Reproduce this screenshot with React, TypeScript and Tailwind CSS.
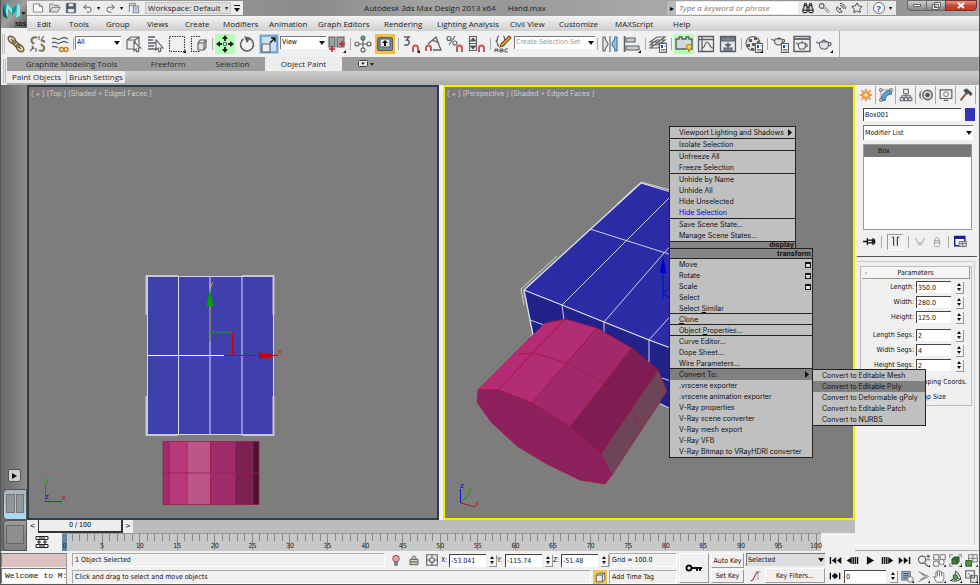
import type { ReactNode } from 'react';
import { Binoculars, Redo2, SatelliteDish, Star, Undo2 } from 'lucide-react';
import clsx from 'clsx';

const uiFont = "font-['Open_Sans','Noto_Sans',sans-serif]";
const formFont = "font-['DejaVu_Sans_Condensed','Open_Sans',sans-serif]";
const quadFont = "font-['Inter','Liberation_Sans',sans-serif]";

const menus = [
  { name: 'Edit', width: 'w-[32px]' },
  { name: 'Tools', width: 'w-[37px]' },
  { name: 'Group', width: 'w-[41px]' },
  { name: 'Views', width: 'w-[38px]' },
  { name: 'Create', width: 'w-[38px]' },
  { name: 'Modifiers', width: 'w-[46px]' },
  { name: 'Animation', width: 'w-[49px]' },
  { name: 'Graph Editors', width: 'w-[66px]' },
  { name: 'Rendering', width: 'w-[53px]' },
  { name: 'Lighting Analysis', width: 'w-[73px]' },
  { name: 'Civil View', width: 'w-[49px]' },
  { name: 'Customize', width: 'w-[56px]' },
  { name: 'MAXScript', width: 'w-[58px]' },
  { name: 'Help', width: 'w-[32px]' },
];

const Icon = ({ children, size = 18 }: { children: ReactNode; size?: number }) => (
  <svg
    width={size}
    height={size}
    viewBox="0 0 18 18"
    fill="none"
    stroke="#5a6067"
    strokeWidth="1.1"
    className="block shrink-0"
    aria-hidden="true"
  >
    {children}
  </svg>
);

const Corner = () => <path d="M18 15v3h-3z" fill="#111" stroke="none" />;

const Magnet = () => (
  <>
    <path d="M11 16v-3a2.500 2.500 0 0 1 5 0v3" stroke="#cf5550" strokeWidth="2" />
    <path d="M10 16.500h2M15 16.500h2" stroke="#777" strokeWidth="1.200" />
  </>
);

const Teapot = () => (
  <path d="M5 7h8c1 3 0 6-2 7H7C5 13 4 10 5 7zM5 9 1 7M13 8c4-2 4 3 0 3M6 7c1-2 5-2 6 0M9 5V4" fill="#e2e2e2" />
);

const Sheet = () => (
  <>
    <path d="M10.500 8.500h7v9h-7z" fill="#fff" />
    <path d="M12 10h2v3h-2z" fill="#1f4e9c" stroke="none" />
    <path d="M15 11h1.500M12 14.500h4.500M12 16h4.500" strokeWidth=".8" />
  </>
);

const Tool = ({ label, tone, children }: { label: string; tone?: string; children: ReactNode }) => (
  <button aria-label={label} className="flex h-5 w-[22px] shrink-0 items-center justify-center">
    <span className={clsx('flex h-5 w-5 items-center justify-center', tone)}>
      <Icon>{children}</Icon>
    </span>
  </button>
);

const Sep = () => (
  <div className="flex w-1 shrink-0 justify-center">
    <div className="h-3 w-px bg-[#aaa]" />
  </div>
);

const Combo = ({ label, value, className }: { label: string; value: string; className?: string }) => (
  <span className={clsx('relative block border-t border-l border-[#777]', className)}>
    <select aria-label={label} className="block h-full w-full appearance-none bg-transparent pr-2 pl-px outline-none">
      <option>{value}</option>
    </select>
    <span className="pointer-events-none absolute inset-y-0 right-0 flex w-2 items-center justify-center">
      <svg width="6" height="4" viewBox="0 0 6 4" aria-hidden="true">
        <path d="M0 0h6L3 4z" fill="#111" />
      </svg>
    </span>
  </span>
);

const Spin = () => (
  <button aria-label="Step value" className="flex h-3 w-2 shrink-0 items-center justify-center bg-[#f4f4f4] shadow-[1px_1px_0_#999]">
    <svg width="6" height="10" viewBox="0 0 6 10" aria-hidden="true">
      <path d="M3 1 5 4H1zM3 9 5 6H1z" fill="#111" />
    </svg>
  </button>
);

const TitleBar = () => (
  <div className="flex h-4 items-center bg-[linear-gradient(90deg,#a5a5a5,#8b8b8b_30%,#a4a4a4_42%,#989898_50%,#a9a9a9_66%,#878787_85%,#a5a5a5)]">
    <div className="flex h-[14px] w-[216px] shrink-0 items-center bg-[#ececec]">
      <div className="flex w-[118px] shrink-0 items-center justify-between px-[5px]">
        <button aria-label="New">
          <Icon size={12}>
            <path d="M2 3h9l5 4v8H2zM11 3v4h5" fill="#fff" />
          </Icon>
        </button>
        <button aria-label="Open">
          <Icon size={12}>
            <path d="M1 15V3h5l2 2h6v3M1 15 5 8h12l-4 7z" fill="#ddd" />
          </Icon>
        </button>
        <button aria-label="Save">
          <Icon size={12}>
            <path d="M2 2h14v14H2z" fill="#4a5663" />
            <path d="M5 2h8v5H5zM4 10h10v6H4z" fill="#e8eef3" />
          </Icon>
        </button>
        <button aria-label="Undo"><Undo2 size={11} color="#555" /></button>
        <span className="text-[6px]">▾</span>
        <button aria-label="Redo"><Redo2 size={11} color="#555" /></button>
        <span className="text-[6px]">▾</span>
        <button aria-label="Project folder">
          <Icon size={12}>
            <path d="M2 15V2h9v3M2 5h9" />
            <path d="M8 6h8v10H8z" fill="#d8e3ee" />
            <path d="M10 9h4M10 12h4" stroke="#48688c" />
          </Icon>
        </button>
      </div>
      <button className="flex h-3 w-[86px] shrink-0 items-center justify-between border border-[#c4c4c4] bg-[#dedede] px-[2px] text-[8px] leading-[10px] whitespace-nowrap text-[#222]">
        Workspace: Default <span className="text-[6px]">▾</span>
      </button>
      <button aria-label="Customize toolbar" className="flex flex-1 items-center justify-center">
        <svg width="6" height="7" viewBox="0 0 6 7" aria-hidden="true">
          <path d="M0 0h6v1H0zM0 3h6L3 7z" fill="#111" />
        </svg>
      </button>
    </div>
    <h1 className="flex min-w-0 flex-1 justify-center gap-3 text-[8px] whitespace-nowrap text-[#1c1c1c]">
      <span>Autodesk 3ds Max Design 2013 x64</span>
      <span>Hand.max</span>
    </h1>
    <div className="flex h-[14px] w-[229px] shrink-0 items-center bg-[#e8e8e8]">
      <span className="w-[9px] bg-[#b9b9b9] text-center text-[8px] leading-[14px]">▸</span>
      <input
        aria-label="Search help"
        placeholder="Type a keyword or phrase"
        className="h-3 w-[122px] bg-white px-[3px] text-[8px] italic outline-none placeholder:text-[#777]"
      />
      <div className="flex flex-1 items-center justify-between px-1">
        <button aria-label="Search"><Binoculars size={12} color="#333" strokeWidth={2.5} /></button>
        <button aria-label="Subscription center">
          <Icon size={12}>
            <circle cx="5.500" cy="6" r="3.500" strokeWidth="1.800" />
            <path d="m8 9 7 7 2-2-7-7" fill="#ddd" />
          </Icon>
        </button>
        <button aria-label="Communication center"><SatelliteDish size={12} color="#444" /></button>
        <button aria-label="Favorites"><Star size={12} color="#444" /></button>
        <span className="h-3 w-px bg-[#bbb]" />
        <button
          aria-label="Help"
          className="flex size-3 items-center justify-center rounded-full border border-[#667] bg-white text-[9px] leading-none font-bold text-[#1d55a8]"
        >
          ?
        </button>
        <span className="text-[6px]">▾</span>
      </div>
    </div>
    <div className="ml-[11px] flex h-full w-[72px] shrink-0 items-start">
      <button aria-label="Minimize" className="flex h-[11px] w-[20px] items-center justify-center rounded-bl-sm border border-[#666] bg-linear-to-b from-[#d0d0d0] to-[#868686]">
        <span className="h-[3px] w-2 border border-[#666] bg-white" />
      </button>
      <button aria-label="Restore" className="flex h-[11px] w-[18px] items-center justify-center border-y border-[#666] bg-linear-to-b from-[#d0d0d0] to-[#868686]">
        <svg width="9" height="8" viewBox="0 0 9 8" fill="#eee" stroke="#666" aria-hidden="true">
          <path d="M2.500 .5h6v5h-6zM.5 2.500h6v5h-6zM2.500 4.500h2v1h-2z" />
        </svg>
      </button>
      <button aria-label="Close" className="flex h-[11px] w-[32px] items-center justify-center rounded-br-sm border border-[#733] bg-linear-to-b from-[#e09a8b] via-[#c94a33] to-[#c23a20]">
        <svg width="8" height="7" viewBox="0 0 8 7" aria-hidden="true">
          <path d="m1 1 6 5M7 1 1 6" stroke="#fff" strokeWidth="2" />
        </svg>
      </button>
    </div>
  </div>
);

const Header = () => (
  <header className={clsx('flex h-[31px]', uiFont)}>
    <button aria-label="Application menu" className="relative h-[28px] w-[26px] shrink-0 bg-linear-to-br from-[#777] via-[#a0a0a0] to-[#555]">
      <svg width="26" height="28" viewBox="0 0 26 28" aria-hidden="true">
        <path d="M2 5 6 3l5 6 5-5 3 1v11l-4 2v-7l-4 4-4-5v9l-5-3z" fill="#0e9a9a" />
        <path d="m6 3 5 6v5L7 9v10l-3-3zM16 4l3 1v11l-4 2z" fill="#8fe3dc" />
        <path d="m2 5 5 14-5-3z" fill="#066" />
        <path d="M20 12h5l-2.500 3z" fill="#222" />
      </svg>
      <span className="absolute right-px bottom-px text-[6px] leading-none font-bold text-[#111]">3DS</span>
    </button>
    <div className="min-w-0 flex-1">
      <TitleBar />
      <nav className="flex h-[15px] items-center bg-linear-to-b from-[#f4f4f4] to-[#cfcfcf] pl-[10px] text-[8px] text-[#222]">
        {menus.map((menu) => (
          <button key={menu.name} className={clsx('shrink-0 text-left whitespace-nowrap', menu.width)}>
            {menu.name}
          </button>
        ))}
      </nav>
    </div>
  </header>
);

const MainToolbar = () => (
  <div className="flex h-[26px] bg-[#f0f0f0]">
    <div role="toolbar" aria-label="Main toolbar" className={clsx('flex items-center border-r border-[#aaa] pr-1 text-[7px]', formFont)}>
      <div className="flex w-1 justify-between pl-px">
        <span className="h-5 w-px bg-[#bbb]" />
        <span className="h-5 w-px bg-[#bbb]" />
      </div>
      <Tool label="Select and Link">
        <g strokeWidth="1.600" stroke="#6d6448">
          <ellipse cx="5" cy="5" rx="4.500" ry="2.800" transform="rotate(45 5 5)" fill="#e8dcae" />
          <ellipse cx="13" cy="13" rx="4.500" ry="2.800" transform="rotate(45 13 13)" fill="#e8dcae" />
          <ellipse cx="9" cy="9" rx="4" ry="2" transform="rotate(45 9 9)" />
        </g>
        <path d="m4 4 2 2M12 12l2 2" stroke="#6d6448" />
      </Tool>
      <Tool label="Unlink Selection">
        <path d="M8 3C5 1 1 4 3 7l2 2M10 15c3 2 6 0 5-3l-3-3M3 11l2 3M12 5l4 2" stroke="#7d7458" strokeWidth="2" />
        <path d="M10 5V1M12 5l3-4M4 13l-3 3M7 13v4" />
      </Tool>
      <Tool label="Bind to Space Warp">
        <path d="M1 4c4-3 4 2 8 0s4-2 8 0M1 8c4-3 4 2 8 0s4-2 8 0M1 12c3-2 4 1 6 0" strokeWidth="1.300" />
        <circle cx="10.500" cy="14.500" r="2" stroke="#b98a1c" strokeWidth="1.600" />
        <circle cx="15" cy="14.500" r="2" stroke="#b98a1c" strokeWidth="1.600" />
      </Tool>
      <Sep />
      <Combo label="Selection filter" value="All" className="mr-px mb-1 h-[13px] w-[46px] bg-white" />
      <Tool label="Select Object">
        <path d="M3 5 7 2h8v9M3 5h8v9H3zM11 5l4-3" fill="#eee" />
        <path d="M10 7v9l2-2 1 3 2-1-1-3h3z" fill="#fff" />
      </Tool>
      <Tool label="Select by Name">
        <path d="M2 2h7M2 5h5M2 8h8M2 11h6M2 14h8" strokeWidth="1.500" />
        <path d="M10 5v10l2-2 1 4 2-1-1-3h3z" fill="#fff" />
      </Tool>
      <Tool label="Rectangular Selection Region">
        <path d="M1.500 1.500h15v15h-15z" stroke="#333" strokeDasharray="1.500 1" />
        <Corner />
      </Tool>
      <Tool label="Window / Crossing">
        <path d="M10 1.500H1.500v15h9" stroke="#333" strokeDasharray="1.500 1" />
        <path d="M8 8l2-3h6v7l-2 3H8zM8 8h6v7M14 8l2-3" fill="#e2e2e2" />
      </Tool>
      <Sep />
      <Tool label="Select and Move" tone="bg-[#b5ffb5]">
        <path d="M7.500 7.500h3v3h-3z" strokeWidth="1" />
        <path d="m9 0 3 4h-2v2H8V4H6zM9 18l-3-4h2v-2h2v2h2zM0 9l4-3v2h2v2H4v2zM18 9l-4-3v2h-2v2h2v2z" fill="#222" stroke="none" />
      </Tool>
      <Tool label="Select and Rotate">
        <path d="M5.500 4a6.500 6.500 0 1 0 6-.5" strokeWidth="1.500" />
        <path d="m7 2 5 1-3 4z" fill="#5a6067" />
      </Tool>
      <Tool label="Select and Scale" tone="bg-[#a9d2ef]">
        <path d="M1 1h16v16H1z" fill="#c7e2f5" stroke="#55799a" />
        <path d="M2 9h8v8H2z" fill="#eee" />
        <path d="m10 8 5-5M11 3h4v4" stroke="#111" strokeWidth="1.400" />
      </Tool>
      <Combo label="Reference coordinate system" value="View" className="mb-1 h-[13px] w-[46px] bg-white" />
      <Tool label="Use Pivot Point Center">
        <path d="M1 2h6v10H1zM9 2h7v10H9z" fill="#9ba1a8" />
        <path d="M4 11v6M1 14h6M14 6v6M11 9h6" stroke="#cc1f1f" strokeWidth="1.600" />
        <Corner />
      </Tool>
      <Sep />
      <Tool label="Select and Manipulate">
        <path d="M9 4v10M4 9h10" />
        <circle cx="9" cy="3" r="2" fill="#6cae5a" />
        <circle cx="9" cy="15" r="2" fill="#eee" />
        <circle cx="3" cy="9" r="2" fill="#eee" />
        <circle cx="15" cy="9" r="2" fill="#eee" />
      </Tool>
      <Tool label="Keyboard Shortcut Override" tone="bg-[#f0c040]">
        <rect x="1.500" y="2.500" width="15" height="13" rx="2" fill="#7d8893" />
        <rect x="4" y="4" width="10" height="8" rx="1" fill="#e9edf0" />
        <path d="m9 5 3 3h-2v3H8V8H6z" fill="#111" stroke="none" />
      </Tool>
      <Sep />
      <Tool label="Snaps Toggle">
        <path d="M2 2h5L4.500 5c4 0 3 5 0 5H2" strokeWidth="1.500" />
        <Magnet />
        <Corner />
      </Tool>
      <Tool label="Angle Snap">
        <path d="M9 15h8L12 2 4 9M15 9c-1-2-5-4-8-3" strokeWidth="1.300" />
        <path d="M2 16v-3a2.500 2.500 0 0 1 5 0v3" stroke="#cf5550" strokeWidth="2" />
      </Tool>
      <Tool label="Percent Snap">
        <circle cx="3" cy="3.500" r="2" />
        <circle cx="9" cy="8" r="2" />
        <path d="M9 1 3 10" />
        <Magnet />
      </Tool>
      <Tool label="Spinner Snap">
        <path d="M1.500 1.500h7v14h-7z" fill="#eee" />
        <path d="m5 3 2.500 3h-5zM5 14l2.500-3h-5zM2 8.500h6" fill="#444" />
        <Magnet />
      </Tool>
      <Sep />
      <Tool label="Edit Named Selection Sets">
        <path d="M5 1C2 1 5 6 1.500 6 5 6 2 11 5 11M9 1c3 0 0 5 3 5-3 0 0 5-3 5" />
        <path d="m7 9 8-8 2 2-8 8-3 1z" fill="#e8a13a" stroke="#7a5518" />
        <path d="M1 17v-3h3v3M1 15.500h3M6 17v-3h3v3zM6 15.500h3M14 14h-3v3h3" strokeWidth="1" />
      </Tool>
      <Combo label="Named selection sets" value="Create Selection Set" className="mb-1 h-[13px] w-[81px] bg-white text-[#999]" />
      <Sep />
      <Tool label="Mirror">
        <path d="M2 2v14h2c0-4 3-5 3-7S4 6 4 2z" fill="#e6e6e6" />
        <path d="M16 2v14h-2c0-4-3-5-3-7s3-3 3-7z" fill="#8fc4ea" stroke="#3f6f96" />
        <path d="M9 1v16" />
      </Tool>
      <Tool label="Align">
        <path d="M1.500 1v16" strokeWidth="1.500" />
        <path d="M3 3h9v4H3zM3 11h13v4H3z" fill="#ccc" />
        <Corner />
      </Tool>
      <Sep />
      <Tool label="Manage Layers">
        <path d="m1 13 7-5h8l-7 5zM1 10l7-5h8l-7 5zM1 7l7-5h8L9 7z" fill="#eee" />
        <Sheet />
      </Tool>
      <Sep />
      <Tool label="Graphite Modeling Tools" tone="bg-[#b5ffb5]">
        <path d="M1 4h3V2h3v2h4V2h3v2h3v10H1z" fill="#d5d8da" strokeWidth="1.400" />
        <circle cx="14" cy="12" r="2.500" fill="#f7d264" stroke="#b98a1c" />
        <path d="M14 14.500V17" stroke="#b98a1c" strokeWidth="2" />
      </Tool>
      <Tool label="Curve Editor">
        <path d="M1.500 1.500h15v15h-15zM5 2v14M2 4.500h14" fill="#eee" strokeWidth="1.300" />
        <path d="M5 13c4 0 2-6 5-6s2 6 6 6" />
      </Tool>
      <Tool label="Schematic View">
        <path d="M1.500 1.500h15v15h-15z" fill="#e4e4e4" strokeWidth="1.300" />
        <path d="M2 2h14v4H2zM5 13h8v3H5z" fill="#7b828a" />
        <path d="M9 7v5M6 9.500h6M7 10l2 2 2-2" />
      </Tool>
      <Sep />
      <Tool label="Material Editor">
        <circle cx="8" cy="8.500" r="7" fill="#e2e4e6" />
        <path d="M4 4h3v3H4zM9 2h3v3H9zM2 9h3v3H2zM7 8h3v3H7zM6 13h3v2H6zM12 6h2v3h-2z" fill="#5a6067" stroke="none" />
        <Sheet />
        <Corner />
      </Tool>
      <Sep />
      <Tool label="Render Setup">
        <path d="M4 4h7c1 3 0 5-2 6H6C4 9 3 7 4 4zM4 6 0 4M11 5c3-2 4 2 0 3M6 3.500h4M8 3V2" fill="#e2e2e2" />
        <Sheet />
      </Tool>
      <Tool label="Rendered Frame Window">
        <path d="M1 1.500h16v15H1z" fill="#eee" strokeWidth="1.400" />
        <path d="M1 4h16" strokeWidth="1.800" />
        <path d="M6 8h6c1 3 0 5-1 6H7C5 12 5 10 6 8zM6 10 3 8M12 9c3-1 3 3 0 3M9 8V6" />
      </Tool>
      <Tool label="Render Production">
        <Teapot />
        <Corner />
      </Tool>
    </div>
  </div>
);

const Ribbon = () => (
  <div className={clsx('flex h-[28px] bg-[#ebebeb] text-[8px] whitespace-nowrap text-[#2b2b2b]', uiFont)}>
    <div className="flex w-[6px] shrink-0 justify-center gap-px py-[2px]">
      <span className="w-px bg-[#bbb]" />
      <span className="w-px bg-[#bbb]" />
    </div>
    <div className="min-w-0 flex-1">
      <div role="tablist" className="flex h-[14px] bg-[#9c9c9c] leading-[14px]">
        <button role="tab" className="w-[129px]">Graphite Modeling Tools</button>
        <button role="tab" className="w-[64px]">Freeform</button>
        <button role="tab" className="w-[65px]">Selection</button>
        <button role="tab" aria-selected="true" className="w-[77px] bg-[#ededed]">Object Paint</button>
        <button aria-label="Minimize ribbon" className="ml-4 flex items-center">
          <svg width="16" height="8" viewBox="0 0 16 8" aria-hidden="true">
            <rect x=".5" y=".5" width="9" height="6" rx="1" fill="#eee" stroke="#444" />
            <path d="M3 2.500h4L5 5zM12 3h4l-2 3z" fill="#222" />
          </svg>
        </button>
      </div>
      <div className="flex h-[14px] gap-px bg-linear-to-b from-[#cdcdcd] to-[#ababab] leading-[12px]">
        <button className="mb-[2px] w-[59px] bg-[#ededed]">Paint Objects</button>
        <button className="mb-[2px] w-[58px] bg-[#ededed]">Brush Settings</button>
      </div>
    </div>
  </div>
);

const Viewport = ({ label, active, children }: { label: string; active?: boolean; children: ReactNode }) => (
  <section className={clsx('relative min-w-0 flex-1 border-2 bg-[#7d7d7d]', active ? 'border-[#f2f200]' : 'border-[#323c47]')}>
    {children}
    <button className={clsx('absolute top-[2px] left-[2px] text-[7px] leading-[10px] whitespace-pre text-[#cfcfcf]', quadFont)}>
      {label}
    </button>
  </section>
);

const TopScene = () => (
  <svg
    className="absolute inset-0 h-full w-full"
    viewBox="29 87 408 431"
    aria-label="Top view of the box and the cylinder"
  >
    <path d="M147.500 276.500h126v158h-126z" fill="#4040ac" stroke="#d4d4ea" />
    <g stroke="#c8c8d2" strokeWidth="2" fill="none">
      <path d="M178 276h-31.500v39M242 276h31.500v39M178 435h-31.500v-39M242 435h31.500v-39" />
    </g>
    <g stroke="#8f8fd0">
      <path d="M178.500 277v157" stroke="#dcdcf4" />
      <path d="M210 277v157M242 277v157" strokeWidth="2" />
      <path d="M148 355.500h76" stroke="#fff" />
    </g>
    <path d="M210 306v35" stroke="#7d7d70" strokeWidth="2" />
    <path d="m210 289 3.500 17h-7z" fill="#00a000" />
    <path d="M210 332.500h22" stroke="#2c7060" strokeWidth="2" />
    <path d="M232.500 332v23.500M224 355.500h54" stroke="#d00000" fill="none" />
    <path d="m277 355.500-18 3.500v-7z" fill="#c80000" />
    <text x="209" y="286" fontSize="8" fill="#c8b450" fontFamily="Liberation Sans, sans-serif">y</text>
    <text x="278" y="354" fontSize="8" fill="#c02020" fontFamily="Liberation Sans, sans-serif">x</text>
    <path d="M163 441h7v64h-7z" fill="#a32b6b" />
    <path d="M169 441h18v64h-18z" fill="#b93a7b" />
    <path d="M187 441h24v64h-24z" fill="#bd5587" />
    <path d="M210 441h26v64h-26z" fill="#a02d6b" />
    <path d="M235 441h18v64h-18z" fill="#7d2153" />
    <path d="M253 441h6v64h-6z" fill="#4a1530" />
    <path d="M163 441.500h96v63h-96zM169.500 441v64M187 441v64M210.500 441v64M235.500 441v64M253 441v64M163 473h96" fill="none" stroke="#9c1c55" strokeOpacity=".8" />
    <path d="M45.500 485v16.500" stroke="#109010" />
    <path d="M45 501.500h17" stroke="#b01818" />
    <g fontSize="8" fontFamily="Liberation Sans, sans-serif">
      <text x="45" y="482" fill="#10a010">y</text>
      <text x="45" y="499" fill="#1010c0">z</text>
      <text x="62" y="500" fill="#c01818">x</text>
    </g>
  </svg>
);

const PerspectiveScene = () => (
  <svg
    className="absolute inset-0 h-full w-full"
    viewBox="445 87 408 431"
    aria-label="Perspective view of the box and the cylinder"
  >
    <path d="m524 290 117-107 90 24v165z" fill="#2c2ca6" />
    <path d="m524 290 38 15 42 17 45 18 82 31v64l-61-27-137-73z" fill="#22228a" />
    <g fill="none" stroke="#dedef2">
      <path d="m524 290 117-107 30 9M524 290l38 15 42 17 45 18 30 11M524 290l9 45" strokeWidth="1.300" />
      <path d="m590 229 82 26M562 305l64-64 46-46M604 322l60-69 10-11M649 340l25-28" strokeWidth=".9" />
      <path d="m562 305 2 15M604 322v16M649 340v31M530 320l14 5M662 378l12 4M660 404l14 6" strokeWidth=".9" />
      <path d="m521 289 36-33M521 289l3 16M617 204l24-22 29 8M531 335v2" stroke="#d2d2d2" />
    </g>
    <path d="M663 300v-43M663 294l8-9M663 294l9 5" stroke="#0808c8" fill="none" />
    <path d="m663 257 3.500 16h-7z" fill="#0000cc" />
    <g stroke="#a11245" strokeWidth=".7">
      <path d="m478 390 67-67 20-4-67 71z" fill="#b62a76" />
      <path d="m498 390 67-71 32 9-65 75z" fill="#b22d74" />
      <path d="m532 403 65-75 35 20-62 79z" fill="#a0286b" />
      <path d="m570 427 62-79 26 22-57 84z" fill="#7d1d51" />
      <path d="m601 454 57-84 9 21-55 84z" fill="#6c4557" />
      <path d="m478 390 20 0 34 13 38 24 31 27 11 21-7 9-25-4-33-16-30-18-26-24-14-20z" fill="#8d215d" />
      <path d="m518 354 16-1 33 10 36 20 28 26 10 20" fill="none" />
    </g>
    <path d="M460.500 503v-14" stroke="#1010c0" />
    <path d="m460.500 503 9-9" stroke="#109010" />
    <path d="m460.500 503 15 4" stroke="#b01818" />
    <g fontSize="8" fontFamily="Liberation Sans, sans-serif">
      <text x="460" y="488" fill="#1010c0">z</text>
      <text x="468" y="491" fill="#10a010">y</text>
      <text x="475" y="506" fill="#c01818">x</text>
    </g>
  </svg>
);

type QuadItem = { text: ReactNode; box?: boolean; arrow?: boolean; tone?: string };

const displayGroups: QuadItem[][] = [
  [{ text: 'Viewport Lighting and Shadows', arrow: true }],
  [{ text: 'Isolate Selection' }],
  [{ text: 'Unfreeze All' }, { text: 'Freeze Selection' }],
  [{ text: 'Unhide by Name' }, { text: 'Unhide All' }, { text: 'Hide Unselected' }, { text: 'Hide Selection', tone: 'text-[#0000f0]' }],
  [{ text: 'Save Scene State...' }, { text: 'Manage Scene States...' }],
];

const transformGroups: QuadItem[][] = [
  [
    { text: 'Move', box: true },
    { text: 'Rotate', box: true },
    { text: 'Scale', box: true },
    { text: 'Select' },
    { text: <>Select <u>S</u>imilar</> },
  ],
  [{ text: <><u>C</u>lone</> }],
  [{ text: <>Object <u>P</u>roperties...</> }],
  [{ text: 'Curve Editor...' }, { text: 'Dope Sheet...' }, { text: 'Wire Parameters...' }],
  [
    { text: 'Convert To:', arrow: true, tone: 'bg-[#808080]' },
    { text: '.vrscene exporter' },
    { text: '.vrscene animation exporter' },
    { text: 'V-Ray properties' },
    { text: 'V-Ray scene converter' },
    { text: 'V-Ray mesh export' },
    { text: 'V-Ray VFB' },
    { text: 'V-Ray Bitmap to VRayHDRI converter' },
  ],
];

const convertItems: QuadItem[] = [
  { text: 'Convert to Editable Mesh' },
  { text: 'Convert to Editable Poly', tone: 'bg-[#808080]' },
  { text: 'Convert to Deformable gPoly' },
  { text: 'Convert to Editable Patch' },
  { text: 'Convert to NURBS' },
];

const QuadRow = ({ item }: { item: QuadItem }) => (
  <button role="menuitem" className={clsx('flex h-[11px] w-full items-center justify-between pr-px pl-[9px] whitespace-nowrap', item.tone)}>
    <span>{item.text}</span>
    {item.box && <span className="h-[6px] w-[6px] border border-t-2 border-[#111] bg-[#ddd]" />}
    {item.arrow && (
      <svg width="5" height="7" viewBox="0 0 5 7" className="mr-px" aria-hidden="true">
        <path d="M0 0v7l4-3.500z" fill="#111" />
      </svg>
    )}
  </button>
);

const QuadMenu = () => (
  <div className={clsx('absolute top-[39px] left-[224px] z-10 text-[7px] leading-[11px] text-[#111]', quadFont)}>
    <div role="menu" aria-label="display" className="w-[127px] border-x border-[#222] bg-[#c0c0c0]">
      {displayGroups.map((group, i) => (
        <div key={i} className="border-t border-[#222]">
          {group.map((item, j) => <QuadRow key={j} item={item} />)}
        </div>
      ))}
      <div className="h-[7px] border-t border-[#222] bg-[#868686] pr-px text-right leading-[6px] font-bold">display</div>
    </div>
    <div role="menu" aria-label="transform" className="relative w-[144px] border border-[#222] bg-[#c0c0c0]">
      <div className="h-[10px] bg-[#868686] pr-px text-right leading-[9px] font-bold">transform</div>
      {transformGroups.map((group, i) => (
        <div key={i} className="shadow-[0_-1px_0_#222]">
          {group.map((item, j) => <QuadRow key={j} item={item} />)}
        </div>
      ))}
      <div role="menu" aria-label="Convert To" className="absolute top-[120px] left-full w-[114px] border border-[#222] bg-[#c0c0c0]">
        {convertItems.map((item, j) => <QuadRow key={j} item={item} />)}
      </div>
    </div>
  </div>
);

const TimeSlider = () => (
  <div className={clsx('flex h-[13px] bg-[#bcbcbc] text-[7px] leading-[11px]', formFont)}>
    <button aria-label="Previous frame" className="w-[11px] bg-[#ededed]">&lt;</button>
    <button className="w-[85px] border-r-2 border-b-2 border-l border-[#333] bg-[#ededed]">0 / 100</button>
    <button aria-label="Next frame" className="w-[10px] bg-[#ededed]">&gt;</button>
  </div>
);

const TrackBar = () => (
  <div className={clsx('flex h-[18px] bg-[#f0f0f0] text-[7px]', formFont)}>
    <button aria-label="Open Mini Curve Editor" className="flex w-[35px] shrink-0 items-center pl-2">
      <svg width="14" height="12" viewBox="0 0 14 12" fill="none" stroke="#222" aria-hidden="true">
        <path d="M1 .5h12v3H1zM1 8.500h12v3H1zM4 2h6M4 10h6M4 4v4M10 4v4M2 6h4M8 6h4" />
      </svg>
    </button>
    <div className="mr-[34px] flex flex-1 justify-between border-t border-[#999] bg-[#c8c8c8] pr-1 pl-[2px]">
      {Array.from({ length: 101 }, (_, frame) => (
        <div key={frame} className="relative flex w-px justify-center">
          {frame === 0 && <span className="absolute -left-[2px] h-[17px] w-[5px] bg-[#5f87a5]" />}
          <span className={clsx('w-px shrink-0 bg-[#888]', frame % 5 === 0 ? 'h-[16px]' : 'h-[7px]')} />
          {frame % 5 === 0 && <span className="absolute top-[7px] leading-[10px] text-[#222]">{frame}</span>}
        </div>
      ))}
    </div>
  </div>
);

const LayoutRail = () => (
  <aside className="flex w-[26px] shrink-0 flex-col justify-end bg-linear-to-r from-[#696969] to-[#8c8c8c]">
    <button aria-label="Expand layout tabs" className="mx-auto mb-[7px] flex size-[13px] items-center justify-center rounded-xs border border-[#555] bg-[#cfcfcf]">
      <svg width="5" height="6" viewBox="0 0 5 6" aria-hidden="true"><path d="M0 0v6l5-3z" fill="#111" /></svg>
    </button>
    <button aria-label="Two-view layout" className="ml-[2px] flex h-[31px] gap-px rounded-l-sm border border-[#555] bg-linear-to-b from-[#aab4bb] to-[#a9dcf7] px-[2px] pt-1 pb-[6px]">
      <span className="h-full flex-1 border border-[#777] bg-[#909699]" />
      <span className="h-full flex-1 border border-[#777] bg-[#909699]" />
    </button>
    <button aria-label="Single-view layout" className="ml-[2px] flex h-[31px] rounded-l-sm border border-[#555] bg-linear-to-b from-[#9a9a9a] to-[#808080] px-[2px] pt-1 pb-[6px]">
      <span className="h-full flex-1 border border-[#666] bg-[#8f8f8f]" />
    </button>
  </aside>
);

const panelTabs: { name: string; art: ReactNode }[] = [
  {
    name: 'Create',
    art: (
      <>
        <path d="m9 1 2 4 4-2-2 4 4 2-4 2 2 4-4-2-2 4-2-4-4 2 2-4-4-2 4-2-2-4 4 2z" fill="#f0a050" stroke="#c8702a" strokeWidth=".6" />
        <circle cx="9" cy="9" r="2" fill="#fff3c0" stroke="none" />
      </>
    ),
  },
  {
    name: 'Modify',
    art: (
      <>
        <path d="M3 16C3 8 8 3 16 3v5c-5 0-8 3-8 8z" fill="#5aa3d8" stroke="#2c5f8c" />
        <path d="M1 1h3v3H1zM14 1h3v3h-3zM1 14h3v3H1z" fill="#fff" />
        <path d="M4 2.500h10M2.500 4v10" strokeWidth=".8" />
      </>
    ),
  },
  { name: 'Hierarchy', art: <path d="M6 1.500h6v6H6zM1.500 12.500h4v4h-4zM7 12.500h4v4H7zM12.500 12.500h4v4h-4zM9 8v4M3.500 12v-2h11v2" fill="#eee" strokeWidth="1.300" /> },
  {
    name: 'Motion',
    art: (
      <>
        <circle cx="11" cy="9" r="6" fill="#d8d8d8" strokeWidth="2" />
        <circle cx="11" cy="9" r="2.500" fill="#555" />
        <path d="M4 3C1 6 1 12 4 15M1.500 5c-1 3-1 5 0 8" />
      </>
    ),
  },
  {
    name: 'Display',
    art: (
      <>
        <path d="M1.500 2.500h15v11h-15zM6 16h6" fill="#eee" strokeWidth="1.500" />
        <circle cx="9" cy="8" r="3" fill="#fff" />
      </>
    ),
  },
  {
    name: 'Utilities',
    art: (
      <>
        <path d="m10 6-8 10" stroke="#8a5438" strokeWidth="2.500" />
        <path d="m6 3 4-2 7 6-2 3-3-3-2 1z" fill="#4a4f55" />
      </>
    ),
  },
];

const Field = ({ name, value, className }: { name: string; value: string; className?: string }) => (
  <label className={clsx('flex h-3 items-center', className)}>
    <span className="mr-[2px] flex-1 text-right">{name}:</span>
    <input defaultValue={value} className="mr-1 h-3 w-[35px] border-t border-l border-[#444] bg-white pl-px outline-none" />
    <Spin />
  </label>
);

const CommandPanel = () => (
  <aside className={clsx('flex w-[124px] shrink-0 flex-col bg-[#f0f0f0] text-[7px] leading-[10px] text-[#111]', formFont)}>
    <div role="tablist" className="flex h-5 items-center pl-px">
      {panelTabs.map((tab) => (
        <button key={tab.name} role="tab" aria-label={tab.name} className="flex h-[18px] w-5 items-center justify-center border-r border-[#aaa]">
          <Icon size={14}>{tab.art}</Icon>
        </button>
      ))}
    </div>
    <div className="mt-[3px] flex h-[13px] gap-1 pr-1 pl-2">
      <input aria-label="Object name" defaultValue="Box001" className="w-0 flex-1 border-t border-l border-[#444] bg-white pl-px outline-none" />
      <button aria-label="Object color" className="w-[10px] bg-[#3434b8]" />
    </div>
    <Combo label="Modifier list" value="Modifier List" className="mt-1 mr-[6px] ml-2 h-[15px] bg-white" />
    <ul className="mt-1 mr-[7px] ml-2 h-[86px] border border-[#999] bg-white">
      <li className="h-[12px] bg-[#787878] pl-[14px] leading-[12px]">Box</li>
    </ul>
    <div className="mt-[3px] flex h-[17px] items-center justify-between pr-3 pl-2">
      <button aria-label="Pin Stack"><Icon size={13}><path d="M0 9h6M6 4v10M6 7h7v4H6M14 4v10M16 6v6" stroke="#111" strokeWidth="1.800" /></Icon></button>
      <span className="h-3 w-px bg-[#aaa]" />
      <button aria-label="Show end result" className="flex h-4 w-4 items-center justify-center border border-t-[#999] border-r-white border-b-white border-l-[#999]">
        <Icon size={11}><path d="M3 2h3v14M15 2h-3v14" stroke="#222" strokeWidth="1.600" /></Icon>
      </button>
      <span className="h-3 w-px bg-[#aaa]" />
      <button aria-label="Make unique"><Icon size={12}><path d="m2 3 5 10h4l5-10M9 8v4" stroke="#888" /></Icon></button>
      <button aria-label="Remove modifier"><Icon size={12}><path d="M5 7h8v6c0 4-8 4-8 0zM6 7c0-6 6-6 6 0M5 10h8" stroke="#888" /></Icon></button>
      <span className="h-3 w-px bg-[#aaa]" />
      <button aria-label="Configure modifier sets">
        <Icon size={13}>
          <path d="M1 2h14v13H1z" fill="#fff" stroke="#1a1a90" strokeWidth="2" />
          <path d="M1 4h14" stroke="#1a1a90" strokeWidth="3" />
          <path d="M7 9h10v7H7zM12 9v7M7 12h10" fill="#ddd" />
        </Icon>
      </button>
    </div>
    <div className="mt-[6px] mr-[2px] ml-[2px] h-px bg-[#555]" />
    <section className="mt-1 mr-1 ml-[2px] flex-1 border-t border-r border-[#ccc]">
      <div className="mt-1 mr-[2px] ml-[3px] h-[140px] border border-[#bbb] px-px">
        <button className="flex h-3 w-full items-center border-r border-b border-[#999] bg-[#f4f4f4]">
          <span className="w-2">-</span>
          <span className="flex-1 pr-2 text-center">Parameters</span>
        </button>
        <div className="flex flex-col gap-[3px] pt-[2px] pr-[7px]">
          <Field name="Length" value="350.0" />
          <Field name="Width" value="280.0" />
          <Field name="Height" value="125.0" />
          <Field name="Length Segs" value="2" className="mt-[3px]" />
          <Field name="Width Segs" value="4" />
          <Field name="Height Segs" value="2" />
        </div>
        <label className="mt-[5px] flex h-3 items-center justify-end gap-1 pr-[3px] whitespace-nowrap">
          <input type="checkbox" defaultChecked className="size-2" />
          Generate Mapping Coords.
        </label>
        <label className="mt-[3px] flex h-3 items-center justify-end gap-1 pr-[24px] whitespace-nowrap">
          <input type="checkbox" className="size-2" />
          Real-World Map Size
        </label>
      </div>
    </section>
    <div className="mr-1 mb-1 ml-[2px] h-px bg-white" />
    <div className="h-px bg-[#aaa]" />
  </aside>
);

const playback: { name: string; d: string }[] = [
  { name: 'Go to Start', d: 'M1 4h2v10H1zM10 4v10L4 9zM17 4v10l-6-5z' },
  { name: 'Previous Frame', d: 'M8 4v10L1 9zM9 4h2v10H9zM12 4h2v10h-2zM15 4h2v10h-2z' },
  { name: 'Play', d: 'M4 3v12l10-6z' },
  { name: 'Next Frame', d: 'M10 4v10l7-5zM1 4h2v10H1zM4 4h2v10H4zM7 4h2v10H7z' },
  { name: 'Go to End', d: 'M1 4v10l6-5zM8 4v10l6-5zM15 4h2v10h-2z' },
];

const navTop: { name: string; art: ReactNode }[] = [
  { name: 'Zoom', art: <><circle cx="7" cy="8" r="5" fill="#e8f0f4" strokeWidth="1.600" /><path d="m10 12 5 5M13 3h5M15.500 1v5M13 8h5" strokeWidth="1.600" /></> },
  { name: 'Zoom All', art: <><path d="M1 1h7v7H1zM10 1h7v7h-7zM1 10h7v7H1z" fill="#eee" /><circle cx="12" cy="11" r="3.500" fill="#fff" /><path d="m14 14 3 3" /></> },
  { name: 'Zoom Extents', art: <><path d="M1 5V1h4M13 1h4v4M17 13v4h-4M5 17H1v-4" /><path d="m4 7 3-3h7v7l-3 3H4z" fill="#3f7f3f" stroke="#1f4f1f" /><path d="M4 7h7v7M11 7l3-3" stroke="#1f4f1f" /></> },
  { name: 'Zoom Extents All', art: <><path d="M5 1h12v10H5zM11 1v10M5 6h12" fill="#eee" /><path d="M1 9h8v8H1z" fill="#4f8f3f" stroke="#1f4f1f" /></> },
];

const navBottom: { name: string; art: ReactNode }[] = [
  { name: 'Field-of-View', art: <path d="m2 2 14 7-14 7M5 5l7 4-7 4" /> },
  { name: 'Pan View', art: <path d="M5 17 1 10c0-2 2-1 3 1V4c0-2 2-2 2 0V2c0-2 3-2 3 0v1c0-2 3-2 3 0v2c0-2 3-2 3 0v7l-2 5zM6 4v5M9 3v6M12 4v5" fill="#fff" /> },
  { name: 'Orbit', art: <><path d="M9 10V1M9 10l7 3M9 10l-7 5" strokeWidth="1.400" /><path d="M9 2c5 2 7 7 7 11-5 3-10 3-14 1" stroke="#111" /><path d="m6 7 3-1 3 2v4l-3 2-3-2z" fill="#4f9f4f" stroke="#1f4f1f" /></> },
  { name: 'Maximize Viewport', art: <><path d="M1 1h12v10H1zM8 8h9v9H8z" fill="#eee" strokeWidth="1.500" /><path d="m4 4 5 5M9 6v3H6" /></> },
];

const NavButton = ({ name, art }: { name: string; art: ReactNode }) => (
  <button aria-label={name} className="flex w-4 justify-center">
    <Icon size={13}>{art}<Corner /></Icon>
  </button>
);

const raised = 'border border-t-white border-r-[#999] border-b-[#999] border-l-white';
const sunken = 'border border-t-[#aaa] border-r-white border-b-white border-l-[#aaa]';

const StatusBar = () => (
  <footer className={clsx('flex h-[33px] gap-[2px] bg-[#f0f0f0] pt-[2px] text-[7px] leading-[12px] whitespace-nowrap text-[#111]', formFont)}>
    <div className="mr-[3px] flex w-[66px] shrink-0 flex-col gap-px border-r border-[#999] font-['Liberation_Mono',monospace] text-[8px]">
      <div className="h-[14px] border-t border-l border-[#777] bg-[#dcc1c1]" />
      <div className="h-[15px] border-t border-l border-[#777] bg-white pl-[3px] leading-[14px]">Welcome to M:</div>
    </div>
    <div className="flex min-w-0 flex-1 flex-col gap-[3px]">
      <div className="flex h-[14px] items-center">
        <p className={clsx('h-full min-w-0 flex-1 pl-[2px]', sunken)}>1 Object Selected</p>
        <div className="flex w-[56px] items-center justify-around pl-[2px]">
          <button aria-label="Adaptive degradation">
            <Icon size={12}>
              <circle cx="9" cy="7" r="5" fill="#e3a0a0" stroke="#7c3a3a" />
              <path d="M7 12h4v5H7z" fill="#888" />
            </Icon>
          </button>
          <button aria-label="Selection lock">
            <Icon size={12}><path d="M3 8h12v8H3zM6 8c0-7 6-7 6 0M3 12h12" fill="#d8cfb4" strokeWidth="1.500" /></Icon>
          </button>
          <button aria-label="Absolute mode">
            <Icon size={12}>
              <path d="M1 1h16v16H1zM9 1v4M9 13v4M1 9h4M13 9h4" fill="#eee" strokeWidth="1.600" />
              <circle cx="9" cy="9" r="3.500" strokeWidth="1.600" />
            </Icon>
          </button>
        </div>
        {[['X', '-53.041'], ['Y', '-115.74'], ['Z', '-51.48']].map(([axis, value]) => (
          <label key={axis} className="flex w-14 items-center">
            <span className="w-2">{axis}:</span>
            <input defaultValue={value} className="mr-[2px] h-[13px] w-[37px] border-t border-l border-[#444] bg-white pl-px outline-none" />
            <Spin />
          </label>
        ))}
        <p className={clsx('h-full w-[68px] pl-[2px]', sunken)}>Grid = 100.0</p>
      </div>
      <div className="flex h-[14px] items-center gap-[2px]">
        <p className={clsx('h-full min-w-0 flex-1 pl-[2px]', sunken)}>Click and drag to select and move objects</p>
        <button aria-label="Communication" className="flex h-[14px] w-[14px] items-center justify-center bg-[#f0c84c]">
          <Icon size={11}><path d="m2 5 4-3h10v10l-4 4H2zM2 5h10v11M12 5l4-3" fill="#eee" strokeWidth="1.600" /></Icon>
        </button>
        <p className={clsx('h-full w-[68px] pl-[2px]', sunken)}>Add Time Tag</p>
      </div>
    </div>
    <button aria-label="Set Keys" className={clsx('flex h-[30px] w-[30px] shrink-0 items-center justify-center', raised)}>
      <svg width="18" height="8" viewBox="0 0 18 8" fill="none" stroke="#111" strokeWidth="2" aria-hidden="true">
        <circle cx="4" cy="4" r="2.500" />
        <path d="M7 4h10M12 4v3M15 4v3" />
      </svg>
    </button>
    <div className="flex w-[33px] shrink-0 flex-col gap-px">
      <button className={clsx('h-[15px]', raised)}>Auto Key</button>
      <button className={clsx('h-[14px]', raised)}>Set Key</button>
    </div>
    <div className="flex w-[79px] shrink-0 flex-col gap-[2px]">
      <Combo label="Key selection set" value="Selected" className="h-[13px] bg-[#dcdcdc]" />
      <div className="flex h-[15px] items-center">
        <button aria-label="Default tangents" className="flex w-[19px] justify-center">
          <Icon size={12}><path d="M1 16c7 0 5-13 12-13" stroke="#a02020" strokeWidth="1.600" /><path d="M8 3h8M12 3v12" stroke="#7080a0" /></Icon>
        </button>
        <button className={clsx('h-full flex-1', raised)}>Key Filters...</button>
      </div>
    </div>
    <div className="flex w-[152px] shrink-0 flex-col gap-[2px]">
      <div className="flex h-[14px] items-center">
        <div className="flex w-[86px] items-center justify-between px-[2px]">
          {playback.map((item) => (
            <button key={item.name} aria-label={item.name}>
              <Icon size={13}><path d={item.d} fill="#111" stroke="none" /></Icon>
            </button>
          ))}
        </div>
        <div className="flex flex-1 justify-end">
          {navTop.map((item) => <NavButton key={item.name} {...item} />)}
        </div>
      </div>
      <div className="flex h-[14px] items-center">
        <button aria-label="Key mode" className="w-[17px] pl-[2px]">
          <Icon size={12}><path d="M1 4h2v10H1zM9 4v10L4 9zM9 4v10l5-5zM15 4h2v10h-2z" fill="#111" stroke="none" /></Icon>
        </button>
        <input aria-label="Current frame" defaultValue="0" className="mr-[3px] h-[13px] w-[42px] border-t border-l border-[#444] bg-white pl-px outline-none" />
        <Spin />
        <div className="flex flex-1 justify-end">
          <NavButton name="Time Configuration" art={<><path d="M1 2h12v12H1z" fill="#9db6cf" /><path d="M3 5h8M3 8h8M3 11h5" stroke="#234" /><circle cx="13" cy="13" r="4" fill="#eee" /></>} />
          {navBottom.map((item) => <NavButton key={item.name} {...item} />)}
        </div>
      </div>
    </div>
  </footer>
);

const App = () => (
  <div className="flex min-h-screen w-full flex-col border-x border-b border-[#555] bg-[#f0f0f0]">
    <Header />
    <MainToolbar />
    <Ribbon />
    <main className="flex flex-1">
      <LayoutRail />
      <div className="flex min-w-0 flex-1 flex-col">
        <div className="flex flex-1 gap-1">
          <Viewport label="[ + ] [Top ] [Shaded + Edged Faces ]">
            <TopScene />
          </Viewport>
          <Viewport label="[ + ] [Perspective ] [Shaded + Edged Faces ]" active>
            <PerspectiveScene />
            <QuadMenu />
          </Viewport>
        </div>
        <TimeSlider />
        <TrackBar />
      </div>
      <CommandPanel />
    </main>
    <StatusBar />
  </div>
);

export default App;
